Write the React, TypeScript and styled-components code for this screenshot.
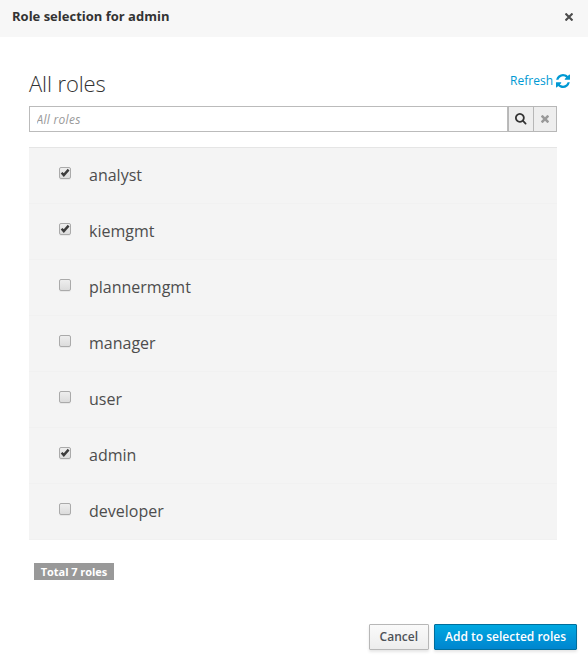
import React, { useState } from 'react';
import styled, { createGlobalStyle, css } from 'styled-components';

const GlobalStyle = createGlobalStyle`
  *, *::before, *::after { box-sizing: border-box; }
  body {
    margin: 0;
    background: #fff;
    color: #333;
    font-family: "Open Sans", "Noto Sans", sans-serif;
    font-size: 12px;
    line-height: 20px;
  }
  button, input { font-family: inherit; }
`;

const Dialog = styled.div`
  display: flex;
  flex-direction: column;
  width: 588px;
  height: 658px;
  overflow: hidden;
`;

const Header = styled.header`
  display: flex;
  justify-content: space-between;
  align-items: flex-start;
  height: 37px;
  padding: 6px 15px 0 12px;
  background: #f7f7f7;
`;

const Title = styled.h4`
  margin: 0;
  font-size: 13px;
  font-weight: 700;
  line-height: 21px;
`;

const IconButton = styled.button`
  display: flex;
  margin: 7px 0 0;
  padding: 0;
  border: 0;
  background: none;
  color: #4d4d4d;
`;

const Content = styled.main`
  flex: 1;
  padding: 32px 31px 0 29px;
`;

const Heading = styled.div`
  display: flex;
  justify-content: space-between;
  height: 37px;
  margin-right: -12.5px;
`;

const ListTitle = styled.h2`
  margin: 0;
  font-size: 22px;
  font-weight: 300;
  letter-spacing: -0.1px;
  line-height: 28px;
`;

const Refresh = styled.a`
  display: flex;
  align-items: center;
  gap: 2.5px;
  height: 24px;
  color: #0099d3;
  text-decoration: none;
`;

const SearchBar = styled.div`
  display: flex;
  height: 26px;
`;

const SearchInput = styled.input`
  flex: 1;
  min-width: 0;
  padding: 2px 6.5px;
  border: 1px solid #bbb;
  border-radius: 0;
  font-size: 12px;
  color: #333;
  outline: 0;
  &::placeholder {
    color: #999;
    font-style: italic;
    letter-spacing: 0.28px;
    opacity: 1;
  }
`;

const SearchButton = styled.button<{ $muted?: boolean }>`
  display: flex;
  align-items: center;
  justify-content: center;
  width: ${p => (p.$muted ? 23 : 26)}px;
  padding: 0;
  border: 1px solid #b7b7b7;
  border-left-width: ${p => (p.$muted ? 0 : 1)}px;
  background: #eee;
  color: ${p => (p.$muted ? '#999' : '#333')};
`;

const RoleList = styled.ul`
  margin: 15px 0 0;
  padding: 0;
  list-style: none;
  border-top: 1px solid #e5e5e5;
`;

const RoleRow = styled.li`
  height: 56px;
  border-bottom: 1px solid #f1f1f1;
  background: #f4f4f4;
`;

const RoleLabel = styled.label`
  display: flex;
  align-items: flex-start;
  gap: 18px;
  padding: 16px 30px 0;
  color: #4d4d4d;
  font-size: 16px;
  line-height: 22px;
`;

const Checkbox = styled.input`
  appearance: none;
  width: 12px;
  height: 12px;
  margin: 3px 0 0;
  border: 1px solid #aaa;
  border-radius: 2px;
  background: linear-gradient(#eee, #dcdcdc);
  box-shadow: 0 1px 0 #e7e7e7;
`;

const CheckSlot = styled.span`
  display: grid;
  > * { grid-area: 1 / 1; }
  > svg { margin: 3px 0 0; pointer-events: none; }
`;

const Total = styled.span`
  display: block;
  width: 80px;
  height: 17px;
  margin: 23px 0 0 5px;
  background: #999;
  color: #fff;
  font-size: 11px;
  font-weight: 700;
  letter-spacing: -0.05px;
  line-height: 18px;
  text-align: center;
`;

const Footer = styled.footer`
  display: flex;
  justify-content: flex-end;
  gap: 5px;
  padding: 0 11px 8px;
`;

const Button = styled.button<{ $primary?: boolean }>`
  height: 26px;
  padding: 0 10px;
  border: 1px solid #b7b7b7;
  border-radius: 1px;
  background: linear-gradient(#fafafa, #ededed);
  box-shadow: 0 2px 3px rgba(0, 0, 0, 0.1);
  color: #4d5258;
  font-size: 12px;
  font-weight: 600;
  line-height: 22px;
  white-space: nowrap;
  ${p => p.$primary && css`
    border-color: #006e9c;
    background: linear-gradient(#00a8e1, #0085cf);
    color: #fff;
  `}
`;

const TimesIcon = ({ size }: { size: number }) => (
  <svg width={size} height={size} viewBox="110 366 1188 1188" fill="currentColor">
    <path d="M1298 1322q0 40-28 68l-136 136q-28 28-68 28t-68-28l-294-294-294 294q-28 28-68 28t-68-28l-136-136q-28-28-28-68t28-68l294-294-294-294q-28-28-28-68t28-68l136-136q28-28 68-28t68 28l294 294 294-294q28-28 68-28t68 28l136 136q28 28 28 68t-28 68l-294 294 294 294q28 28 28 68z" />
  </svg>
);

const CloseIcon = () => (
  <svg width="8" height="8" viewBox="0 0 8 8" fill="none" stroke="currentColor" strokeWidth="2.1">
    <path d="M0.500 0.500 7.500 7.500M7.500 0.500 0.500 7.500" />
  </svg>
);

const SearchIcon = () => (
  <svg width="11.5" height="11.5" viewBox="0 128 1664 1664" fill="currentColor">
    <path d="M1152 832q0-185-131.500-316.500t-316.500-131.500-316.500 131.500-131.500 316.500 131.500 316.500 316.500 131.500 316.500-131.500 131.500-316.500zm512 832q0 52-38 90t-90 38q-54 0-90-38l-343-342q-179 124-399 124-143 0-273.500-55.500t-225-150-150-225-55.500-273.500 55.500-273.500 150-225 225-150 273.500-55.500 273.500 55.500 225 150 150 225 55.500 273.500q0 220-124 399l343 343q37 37 37 90z" />
  </svg>
);

const RefreshIcon = () => (
  <svg width="14" height="14" viewBox="0 0 1536 1536" fill="currentColor">
    <path d="M1511 928q0 5-1 7-64 268-268 434.500t-478 166.500q-146 0-282.500-55t-243.500-157l-129 129q-19 19-45 19t-45-19-19-45v-448q0-26 19-45t45-19h448q26 0 45 19t19 45-19 45l-137 137q71 66 161 102t187 36q134 0 250-65t186-179q11-17 53-117 8-23 30-23h192q13 0 22.500 9.500t9.500 22.500zm25-800v448q0 26-19 45t-45 19h-448q-26 0-45-19t-19-45 19-45l138-138q-148-137-349-137-134 0-250 65t-186 179q-11 17-53 117-8 23-30 23h-199q-13 0-22.500-9.500t-9.500-22.500v-7q65-268 270-434.500t480-166.500q146 0 284 55.500t245 156.500l130-129q19-19 45-19t45 19 19 45z" />
  </svg>
);

const CheckIcon = () => (
  <svg width="12" height="12" viewBox="0 0 12 12" fill="none" stroke="#3c3c3c" strokeWidth="2.4">
    <path d="M2.600 5.700 4.800 8.100 9.600 2.600" />
  </svg>
);

const roles = ['analyst', 'kiemgmt', 'plannermgmt', 'manager', 'user', 'admin', 'developer'];

export default function App() {
  const [selected, setSelected] = useState(['analyst', 'kiemgmt', 'admin']);
  const toggle = (role: string) =>
    setSelected(s => (s.includes(role) ? s.filter(r => r !== role) : [...s, role]));

  return (
    <>
      <GlobalStyle />
      <Dialog>
        <Header>
          <Title>Role selection for admin</Title>
          <IconButton aria-label="Close"><CloseIcon /></IconButton>
        </Header>
        <Content>
          <Heading>
            <ListTitle>All roles</ListTitle>
            <Refresh href="#">Refresh <RefreshIcon /></Refresh>
          </Heading>
          <SearchBar>
            <SearchInput placeholder="All roles" />
            <SearchButton aria-label="Search"><SearchIcon /></SearchButton>
            <SearchButton $muted aria-label="Clear"><TimesIcon size={8} /></SearchButton>
          </SearchBar>
          <RoleList>
            {roles.map(role => (
              <RoleRow key={role}>
                <RoleLabel>
                  <CheckSlot>
                    <Checkbox type="checkbox" checked={selected.includes(role)} onChange={() => toggle(role)} />
                    {selected.includes(role) && <CheckIcon />}
                  </CheckSlot>
                  {role}
                </RoleLabel>
              </RoleRow>
            ))}
          </RoleList>
          <Total>Total {roles.length} roles</Total>
        </Content>
        <Footer>
          <Button>Cancel</Button>
          <Button $primary>Add to selected roles</Button>
        </Footer>
      </Dialog>
    </>
  );
}
